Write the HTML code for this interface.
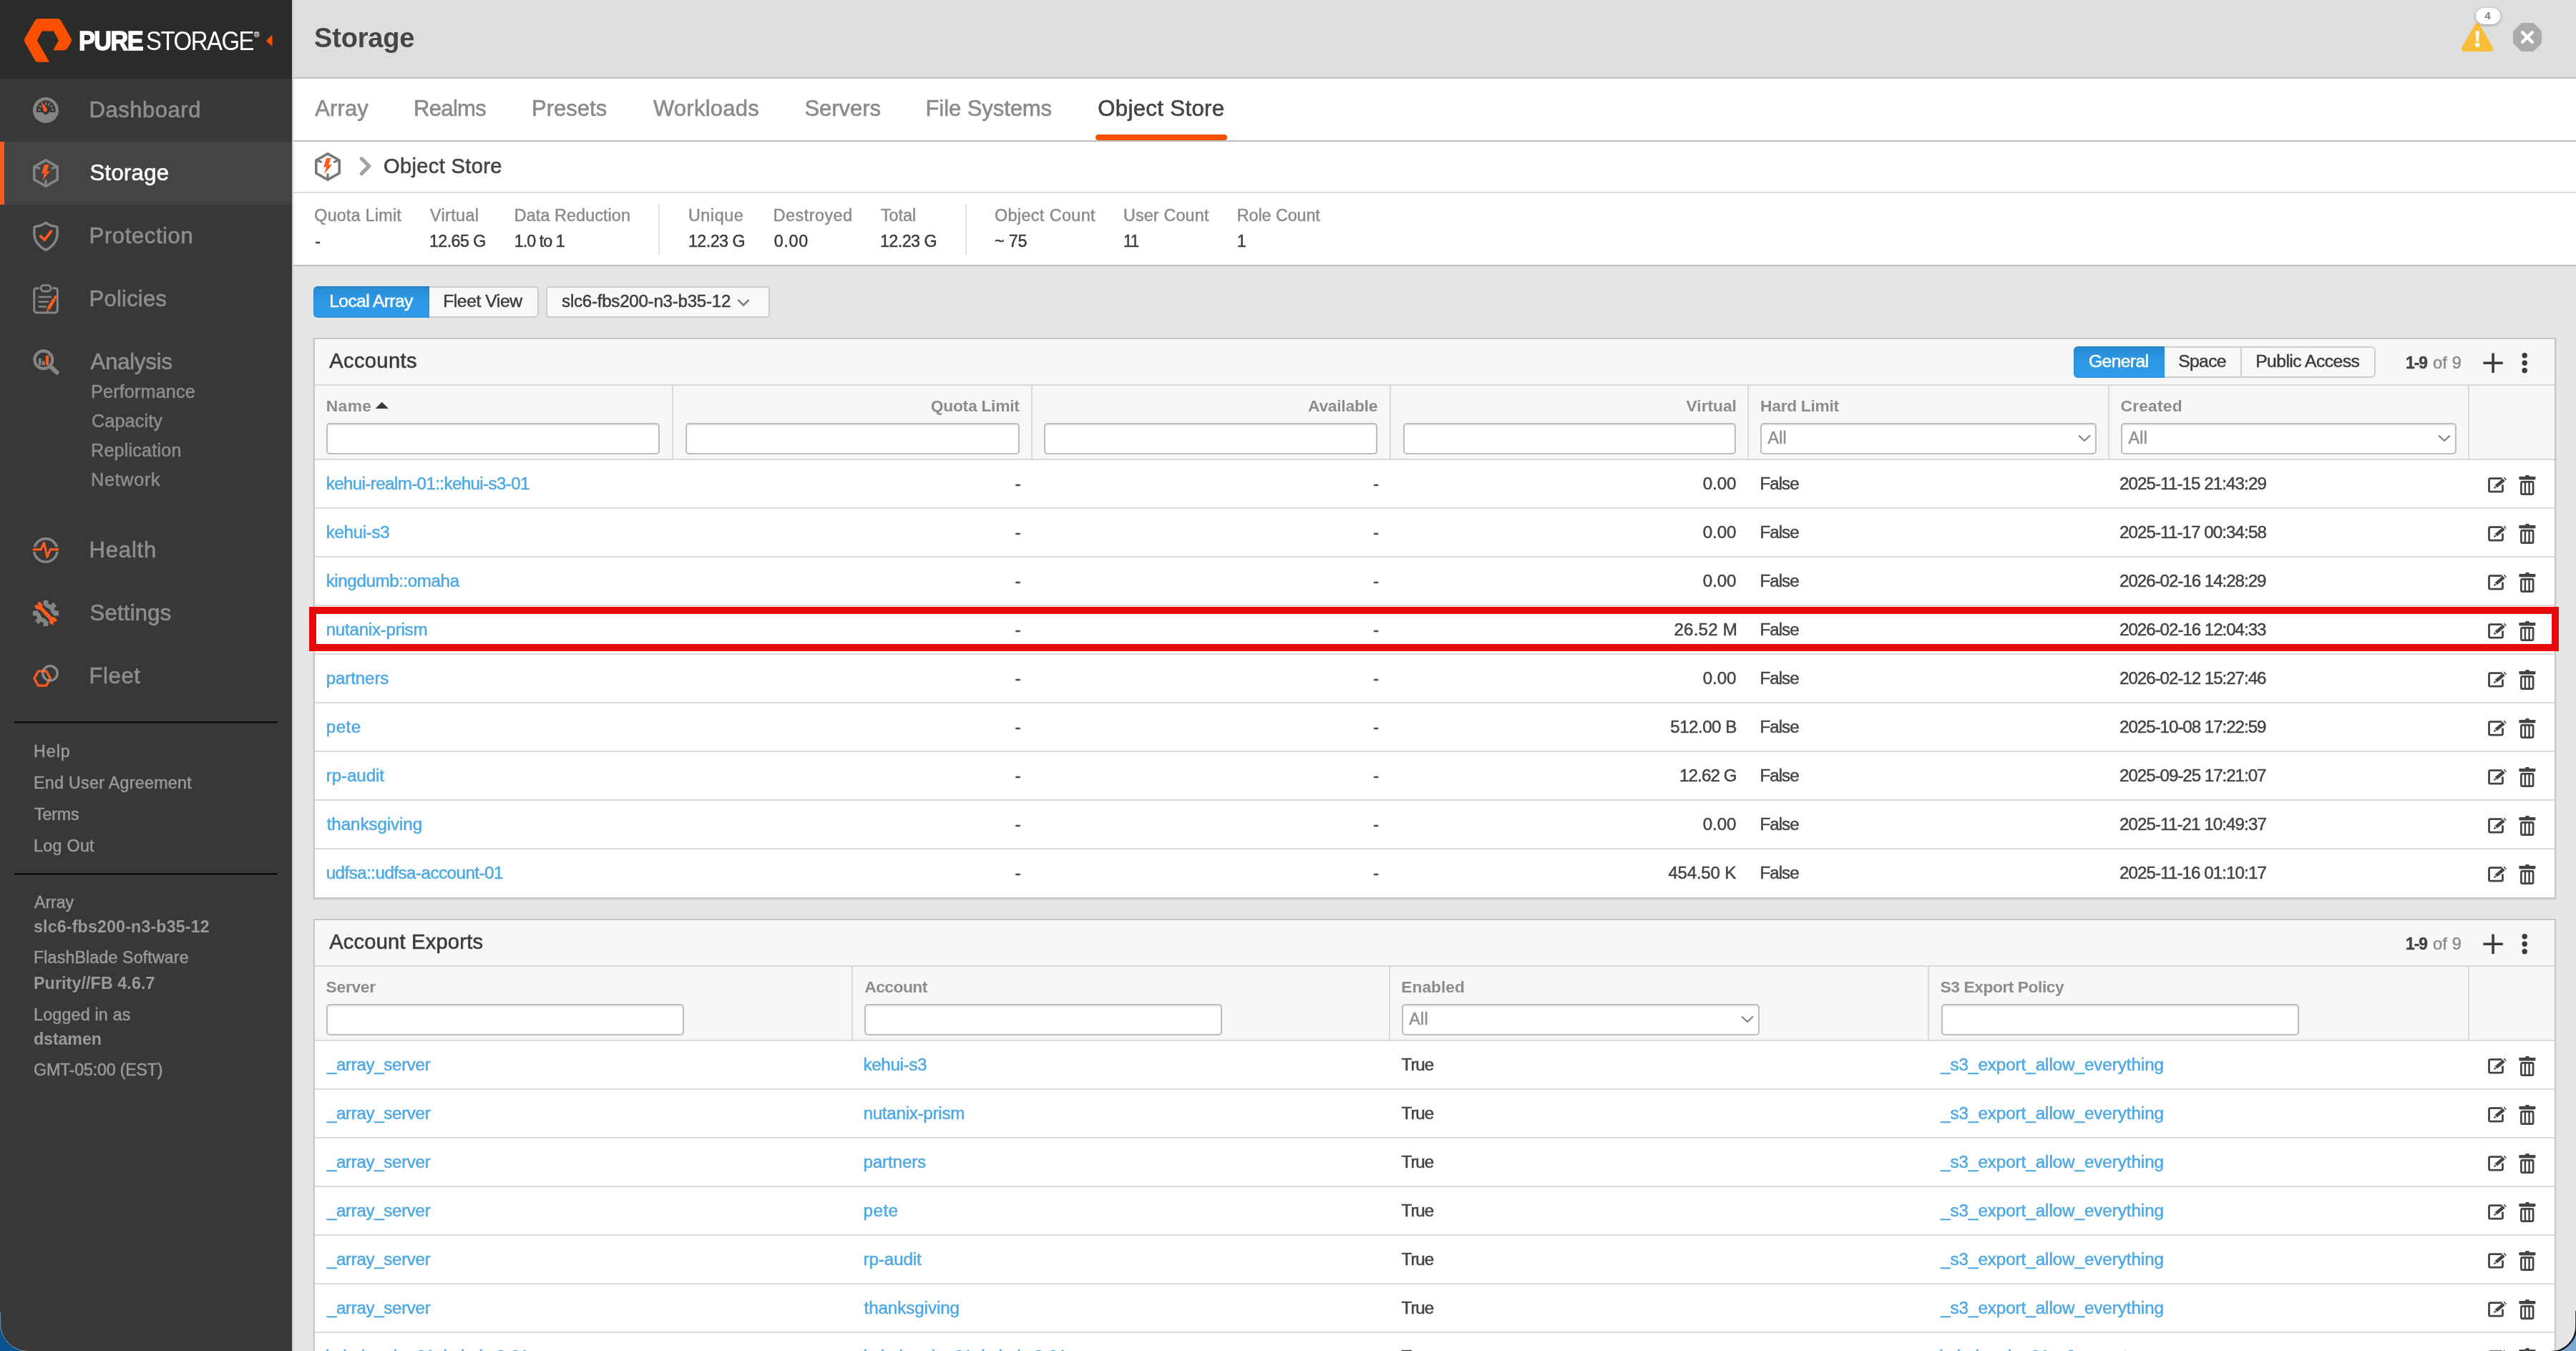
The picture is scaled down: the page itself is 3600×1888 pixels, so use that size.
<!DOCTYPE html>
<html lang="en">
<head>
<meta charset="utf-8">
<title>Pure Storage - Storage - Object Store</title>
<style>
html,body{margin:0;padding:0;}
body{width:3600px;height:1888px;overflow:hidden;background:#0b528f;font-family:"Liberation Sans",sans-serif;}
#app{position:relative;width:3600px;height:1888px;overflow:hidden;background:#e5e5e5;will-change:transform;}
#app div,#app span.t,#app svg,#app nav,#app header,#app section{position:absolute;box-sizing:border-box;}
.g{left:0;top:0;width:0;height:0;}
span.t{white-space:pre;line-height:1;display:block;transform-origin:0 0;}
.inp{background:#fff;border:2px solid #bdbdbd;border-radius:5px;box-shadow:inset 0 2px 2px rgba(0,0,0,.08);}
.rowline{background:#d9d9d9;height:2px;}
.vline{background:#dadada;width:2px;}

</style>
</head>
<body>
<div id="app">
<div style="left:410px;top:0px;width:3190px;height:110px;background:#dedede;border-bottom:2px solid #c1c1c1;"></div>
<div style="left:410px;top:110px;width:3190px;height:88px;background:#fff;border-bottom:2px solid #bcbcbc;"></div>
<div style="left:410px;top:198px;width:3190px;height:72px;background:#fff;border-bottom:2px solid #dcdcdc;"></div>
<div style="left:410px;top:270px;width:3190px;height:102px;background:#fff;border-bottom:2px solid #bfbfbf;"></div>
<div style="left:408px;top:0px;width:2px;height:1888px;background:#cacaca;"></div>
<nav id="sidebar" style="left:0;top:0;width:408px;height:1888px;background:#383838;">
<div style="left:0px;top:0px;width:408px;height:110px;background:#2b2b2b;"></div>
<div style="left:0px;top:198px;width:408px;height:88px;background:#444444;border-left:6px solid #fe5a1f;"></div>
<svg style="left:30px;top:22px" width="76" height="70" viewBox="30 22 76 70"><path d="M49.06 28.40 A5 5 0 0 1 53.39 25.90 L80.60 25.90 A5 5 0 0 1 84.94 28.42 L99.38 53.70 A5 5 0 0 1 99.36 58.69 L94.14 67.70 A5 5 0 0 1 89.82 70.20 L74.30 70.20 L81.84 56.79 A0.6 0.6 0 0 0 81.84 56.21 L75.17 43.91 A0.6 0.6 0 0 0 74.64 43.60 L58.96 43.60 A0.6 0.6 0 0 0 58.43 43.92 L51.86 56.21 A0.6 0.6 0 0 0 51.87 56.79 L68.49 85.80 A0.6 0.6 0 0 1 67.96 86.70 L53.11 86.70 A4.5 4.5 0 0 1 49.20 84.44 L34.43 58.70 A5 5 0 0 1 34.44 53.71 Z" fill="#fe5000"/></svg>
<span class="t" style="left:109.8px;top:40px;font-size:36.4px;color:#fff;font-weight:700;-webkit-text-stroke:1.30px;letter-spacing:-1.64px;transform:scaleX(0.9423);">PURE</span>
<span class="t" style="left:203.5px;top:40px;font-size:36.4px;color:#fff;letter-spacing:-1.64px;transform:scaleX(0.9051);">STORAGE</span>
<span class="t" style="left:355.0px;top:44px;font-size:10px;color:#fff;-webkit-text-stroke:0.20px;">®</span>
<svg style="left:371px;top:48px" width="10" height="18" viewBox="0 0 10 18"><path d="M9.5 0.5 L0.8 9 L9.5 17 Z" fill="#fe5000"/></svg>
<span class="t" style="left:124.6px;top:138px;font-size:31.04px;color:#8e8e8e;-webkit-text-stroke:0.62px;letter-spacing:0.50px;">Dashboard</span>
<span class="t" style="left:125.6px;top:226px;font-size:31.04px;color:#fff;-webkit-text-stroke:0.62px;letter-spacing:0.28px;">Storage</span>
<span class="t" style="left:124.6px;top:314px;font-size:31.04px;color:#8e8e8e;-webkit-text-stroke:0.62px;letter-spacing:0.60px;">Protection</span>
<span class="t" style="left:124.6px;top:402px;font-size:31.04px;color:#8e8e8e;-webkit-text-stroke:0.62px;letter-spacing:0.20px;">Policies</span>
<span class="t" style="left:126.6px;top:490px;font-size:31.04px;color:#8e8e8e;-webkit-text-stroke:0.62px;letter-spacing:-0.16px;">Analysis</span>
<span class="t" style="left:124.6px;top:753px;font-size:31.04px;color:#8e8e8e;-webkit-text-stroke:0.62px;letter-spacing:0.80px;">Health</span>
<span class="t" style="left:125.6px;top:841px;font-size:31.04px;color:#8e8e8e;-webkit-text-stroke:0.62px;letter-spacing:0.23px;">Settings</span>
<span class="t" style="left:124.6px;top:929px;font-size:31.04px;color:#8e8e8e;-webkit-text-stroke:0.62px;letter-spacing:0.57px;">Fleet</span>
<span class="t" style="left:127.0px;top:535px;font-size:25.22px;color:#8e8e8e;-webkit-text-stroke:0.50px;letter-spacing:0.14px;">Performance</span>
<span class="t" style="left:128.0px;top:576px;font-size:25.22px;color:#8e8e8e;-webkit-text-stroke:0.50px;letter-spacing:0.11px;">Capacity</span>
<span class="t" style="left:127.0px;top:617px;font-size:25.22px;color:#8e8e8e;-webkit-text-stroke:0.50px;letter-spacing:0.17px;">Replication</span>
<span class="t" style="left:127.0px;top:658px;font-size:25.22px;color:#8e8e8e;-webkit-text-stroke:0.50px;letter-spacing:0.70px;">Network</span>
<svg style="left:40px;top:130px" width="50" height="840" viewBox="40 130 50 840">
<!-- dashboard -->
<circle cx="63.9" cy="153.9" r="18" fill="#848484"/>
<path d="M51 156.7 A13.5 13.5 0 1 1 77.4 156.7 Z" fill="#383838"/>
<circle cx="63.9" cy="155.8" r="4.3" fill="#383838"/>
<g stroke="#848484" stroke-width="1.7" stroke-linecap="round"><path d="M53.4 153.6 l2.7 -0.6"/><path d="M55.4 147.8 l2.3 1.6"/><path d="M64.1 143.2 l0 2.9"/><path d="M69 144.4 l-1.1 2.7"/><path d="M73 147.8 l-2.3 1.6"/><path d="M75 153.6 l-2.7 -0.6"/></g>
<path d="M56.7 140.3 L66 152.6 A2.8 2.8 0 0 1 61.2 155.2 Z" fill="#ff5a1f"/>
<!-- storage -->
<path d="M64 223.9 L80.2 233 L80.2 251 L64 260.1 L47.8 251 L47.8 233 Z" fill="none" stroke="#848484" stroke-width="3.6" stroke-linejoin="round"/>
<path d="M48.5 232.6 L54.6 235.2 M79.5 232.6 L73.4 235.2 M64 259.5 L64 252.6" stroke="#848484" stroke-width="3.2" stroke-linecap="round"/>
<path d="M62.1 230.1 L68.4 230.1 L65.4 239.3 L69.9 239.3 L59.1 252.5 L62.1 242.5 L58.1 242.5 Z" fill="#ff5a1f"/>
<!-- protection -->
<path d="M64 311.2 C60 314.4 55 316.2 50 316.6 Q47.9 316.8 47.9 319 L47.9 326 C47.9 337 54.5 344.6 64 349.4 C73.5 344.6 80.1 337 80.1 326 L80.1 319 Q80.1 316.8 78 316.6 C73 316.2 68 314.4 64 311.2 Z" fill="none" stroke="#848484" stroke-width="3.5" stroke-linejoin="round"/>
<path d="M56.6 330.2 L62.4 335.2 L71.6 323.2" fill="none" stroke="#ff5a1f" stroke-width="3.7" stroke-linejoin="round" stroke-linecap="round"/>
<!-- policies -->
<path d="M55 402.7 L51.6 402.7 Q47.7 402.7 47.7 406.6 L47.7 433 Q47.7 436.9 51.6 436.9 L76.4 436.9 Q80.3 436.9 80.3 433 L80.3 406.6 Q80.3 402.7 76.4 402.7 L73 402.7" fill="none" stroke="#848484" stroke-width="3"/>
<rect x="57.4" y="398.6" width="13.4" height="8.4" rx="3.6" fill="none" stroke="#848484" stroke-width="2.8"/>
<path d="M54.6 415 L71 415 M54.6 421.8 L67.2 421.8 M54.6 428.6 L63.8 428.6" stroke="#848484" stroke-width="2.5" stroke-linecap="round"/>
<path d="M76 417.6 L67.4 432.2" stroke="#ff5a1f" stroke-width="4.5"/>
<circle cx="77.4" cy="415.4" r="2.3" fill="#ff5a1f"/>
<path d="M64.8 436.5 L65.6 432.3 L68.9 434.2 Z" fill="#ff5a1f"/>
<!-- analysis -->
<circle cx="60.8" cy="502.7" r="12.4" fill="none" stroke="#848484" stroke-width="4.2"/>
<path d="M70.8 512.6 L79.4 520.6" stroke="#848484" stroke-width="6.2" stroke-linecap="round"/>
<rect x="54" y="501" width="3.7" height="9.4" fill="#848484"/><rect x="59" y="504.4" width="3.7" height="6" fill="#848484"/><rect x="64.1" y="496.9" width="4" height="13.5" fill="#ff5a1f"/>
<!-- health -->
<circle cx="63.9" cy="769.1" r="16.2" fill="none" stroke="#848484" stroke-width="3.6"/>
<path d="M44 767.8 L84 767.8" stroke="#383838" stroke-width="6.6"/>
<path d="M46 767.8 L57.2 767.8 L61.6 758.8 L66 778.4 L70.4 767.8 L82 767.8" fill="none" stroke="#ff5a1f" stroke-width="3.2" stroke-linejoin="round"/>
<!-- settings -->
<g transform="translate(64 857)">
<circle r="10.5" fill="none" stroke="#848484" stroke-width="6"/>
<g fill="#848484"><rect x="-3.4" y="-18" width="6.8" height="7"/><rect x="-3.4" y="11" width="6.8" height="7"/><rect x="-18" y="-3.4" width="7" height="6.8"/><rect x="11" y="-3.4" width="7" height="6.8"/>
<g transform="rotate(45)"><rect x="-3.4" y="-18" width="6.8" height="7"/><rect x="-3.4" y="11" width="6.8" height="7"/><rect x="-18" y="-3.4" width="7" height="6.8"/><rect x="11" y="-3.4" width="7" height="6.8"/></g></g>
<circle r="7.6" fill="#383838"/>
<path d="M-13 -13.5 L13 13.5" stroke="#383838" stroke-width="12" stroke-linecap="round"/>
<path d="M-8.5 -9 L8.5 9" stroke="#ff5a1f" stroke-width="5.4" stroke-linecap="butt"/>
<circle cx="-10" cy="-10.6" r="5.3" fill="#ff5a1f"/><circle cx="10" cy="10.6" r="5.3" fill="#ff5a1f"/>
<path d="M-15.5 -14 L-11 -13.2" stroke="#383838" stroke-width="4.2"/><path d="M15.5 14 L11 13.2" stroke="#383838" stroke-width="4.2"/>
</g>
<!-- fleet -->
<path d="M53.5 937.8 L64.7 937.8 L70.3 948 L64.7 958.2 L53.5 958.2 L47.9 948 Z" fill="none" stroke="#ff5a1f" stroke-width="3.3" stroke-linejoin="round"/>
<circle cx="70" cy="940.9" r="10.2" fill="none" stroke="#9a9a9a" stroke-opacity="0.85" stroke-width="3.2"/>
</svg>
<div style="left:20px;top:1008px;width:368px;height:4px;background:#111;border-bottom:1px solid #474747;"></div>
<div style="left:20px;top:1219.5px;width:368px;height:4px;background:#111;border-bottom:1px solid #474747;"></div>
<span class="t" style="left:47.0px;top:1039px;font-size:23.28px;color:#9a9a9a;-webkit-text-stroke:0.47px;letter-spacing:0.97px;">Help</span>
<span class="t" style="left:47.0px;top:1083px;font-size:23.28px;color:#9a9a9a;-webkit-text-stroke:0.47px;letter-spacing:0.28px;">End User Agreement</span>
<span class="t" style="left:48.0px;top:1127px;font-size:23.28px;color:#9a9a9a;-webkit-text-stroke:0.47px;letter-spacing:-0.20px;">Terms</span>
<span class="t" style="left:47.0px;top:1171px;font-size:23.28px;color:#9a9a9a;-webkit-text-stroke:0.47px;letter-spacing:0.30px;">Log Out</span>
<span class="t" style="left:48.0px;top:1250px;font-size:23.28px;color:#9a9a9a;-webkit-text-stroke:0.47px;letter-spacing:-0.10px;">Array</span>
<span class="t" style="left:47.0px;top:1327px;font-size:23.28px;color:#9a9a9a;-webkit-text-stroke:0.47px;letter-spacing:0.11px;">FlashBlade Software</span>
<span class="t" style="left:47.0px;top:1407px;font-size:23.28px;color:#9a9a9a;-webkit-text-stroke:0.47px;letter-spacing:0.20px;">Logged in as</span>
<span class="t" style="left:47.0px;top:1484px;font-size:23.28px;color:#9a9a9a;-webkit-text-stroke:0.47px;letter-spacing:-0.22px;">GMT-05:00 (EST)</span>
<span class="t" style="left:47.0px;top:1284px;font-size:23.28px;color:#9a9a9a;font-weight:700;letter-spacing:0.13px;">slc6-fbs200-n3-b35-12</span>
<span class="t" style="left:47.0px;top:1363px;font-size:23.28px;color:#9a9a9a;font-weight:700;letter-spacing:0.09px;">Purity//FB 4.6.7</span>
<span class="t" style="left:47.0px;top:1441px;font-size:23.28px;color:#9a9a9a;font-weight:700;letter-spacing:-0.12px;">dstamen</span>
</nav>
<header class="g">
<span class="t" style="left:439.0px;top:34px;font-size:38.0px;color:#454545;font-weight:700;letter-spacing:-0.17px;">Storage</span>
<svg style="left:3436px;top:8px" width="130" height="70" viewBox="3436 8 130 70">
<path d="M3462.1 36.6 L3480.3 68 L3443.9 68 Z" fill="#fbbe38" stroke="#fbbe38" stroke-width="8" stroke-linejoin="round"/>
<path d="M3459.6 44.2 Q3462.2 42 3464.8 44.2 L3463.9 57.6 Q3462.2 58.8 3460.5 57.6 Z" fill="#fff"/><circle cx="3462.2" cy="62.8" r="3" fill="#fff"/>
<rect x="3460" y="10.9" width="34.3" height="23" rx="11.5" fill="#fff" style="filter:drop-shadow(0 1.5px 2px rgba(0,0,0,.35))"/>
<path d="M3524.2 32.6 L3540 32.6 L3551.4 44 L3551.4 60 L3540 71.4 L3524.2 71.4 L3512.8 60 L3512.8 44 Z" fill="#ababab" stroke="#ababab" stroke-width="1.4" stroke-linejoin="round"/>
<path d="M3525.2 45.2 L3538.8 58.8 M3538.8 45.2 L3525.2 58.8" stroke="#fff" stroke-width="4.4" stroke-linecap="round"/>
</svg>
<span class="t" style="left:3472.3px;top:14px;font-size:15.5px;color:#828282;font-weight:700;">4</span>
</header>
<nav class="g">
<span class="t" style="left:440.3px;top:136px;font-size:31.04px;color:#8b8b8b;-webkit-text-stroke:0.62px;letter-spacing:0.10px;">Array</span>
<span class="t" style="left:578.0px;top:136px;font-size:31.04px;color:#8b8b8b;-webkit-text-stroke:0.62px;letter-spacing:-0.68px;">Realms</span>
<span class="t" style="left:743.0px;top:136px;font-size:31.04px;color:#8b8b8b;-webkit-text-stroke:0.62px;">Presets</span>
<span class="t" style="left:912.9px;top:136px;font-size:31.04px;color:#8b8b8b;-webkit-text-stroke:0.62px;letter-spacing:0.23px;">Workloads</span>
<span class="t" style="left:1124.4px;top:136px;font-size:31.04px;color:#8b8b8b;-webkit-text-stroke:0.62px;letter-spacing:-0.03px;">Servers</span>
<span class="t" style="left:1293.5px;top:136px;font-size:31.04px;color:#8b8b8b;-webkit-text-stroke:0.62px;letter-spacing:-0.09px;">File Systems</span>
<span class="t" style="left:1534.2px;top:136px;font-size:31.04px;color:#444;-webkit-text-stroke:0.62px;letter-spacing:0.40px;">Object Store</span>
<div style="left:1531px;top:188px;width:184px;height:8px;background:#fa4f00;border-radius:4px;"></div>
</nav>
<div class="g">
<svg style="left:436px;top:208px" width="90" height="50" viewBox="436 208 90 50">
<path d="M458 214.9 L474.2 224 L474.2 242 L458 251.1 L441.8 242 L441.8 224 Z" fill="none" stroke="#787878" stroke-width="3.6" stroke-linejoin="round"/>
<path d="M442.5 223.6 L448.6 226.2 M473.5 223.6 L467.4 226.2 M458 250.5 L458 243.6" stroke="#787878" stroke-width="3.2" stroke-linecap="round"/>
<path d="M456.1 221.1 L462.4 221.1 L459.4 230.3 L463.9 230.3 L453.1 243.5 L456.1 233.5 L452.1 233.5 Z" fill="#ff5a1f"/>
<path d="M505.4 221.8 L515.8 232.2 L505.4 242.6" fill="none" stroke="#a3a3a3" stroke-width="5.2" stroke-linecap="round" stroke-linejoin="round"/>
</svg>
<span class="t" style="left:536.0px;top:218px;font-size:29.1px;color:#444;-webkit-text-stroke:0.58px;letter-spacing:0.34px;">Object Store</span>
</div>
<section class="g">
<span class="t" style="left:439.3px;top:290px;font-size:23.28px;color:#8b8b8b;-webkit-text-stroke:0.47px;letter-spacing:0.25px;">Quota Limit</span>
<span class="t" style="left:440.3px;top:326px;font-size:23.25px;color:#3c3c3c;-webkit-text-stroke:0.47px;">-</span>
<span class="t" style="left:601.0px;top:290px;font-size:23.28px;color:#8b8b8b;-webkit-text-stroke:0.47px;letter-spacing:0.40px;">Virtual</span>
<span class="t" style="left:600.0px;top:326px;font-size:23.25px;color:#3c3c3c;-webkit-text-stroke:0.47px;letter-spacing:-0.58px;">12.65 G</span>
<span class="t" style="left:718.8px;top:290px;font-size:23.28px;color:#8b8b8b;-webkit-text-stroke:0.47px;letter-spacing:0.13px;">Data Reduction</span>
<span class="t" style="left:718.8px;top:326px;font-size:23.25px;color:#3c3c3c;-webkit-text-stroke:0.47px;letter-spacing:-0.97px;">1.0 to 1</span>
<span class="t" style="left:961.9px;top:290px;font-size:23.28px;color:#8b8b8b;-webkit-text-stroke:0.47px;letter-spacing:0.62px;">Unique</span>
<span class="t" style="left:961.9px;top:326px;font-size:23.25px;color:#3c3c3c;-webkit-text-stroke:0.47px;letter-spacing:-0.52px;">12.23 G</span>
<span class="t" style="left:1080.7px;top:290px;font-size:23.28px;color:#8b8b8b;-webkit-text-stroke:0.47px;letter-spacing:0.54px;">Destroyed</span>
<span class="t" style="left:1081.7px;top:326px;font-size:23.25px;color:#3c3c3c;-webkit-text-stroke:0.47px;letter-spacing:0.73px;">0.00</span>
<span class="t" style="left:1230.9px;top:290px;font-size:23.28px;color:#8b8b8b;-webkit-text-stroke:0.47px;letter-spacing:0.05px;">Total</span>
<span class="t" style="left:1229.9px;top:326px;font-size:23.25px;color:#3c3c3c;-webkit-text-stroke:0.47px;letter-spacing:-0.52px;">12.23 G</span>
<span class="t" style="left:1389.9px;top:290px;font-size:23.28px;color:#8b8b8b;-webkit-text-stroke:0.47px;letter-spacing:0.44px;">Object Count</span>
<span class="t" style="left:1389.9px;top:326px;font-size:23.25px;color:#3c3c3c;-webkit-text-stroke:0.47px;letter-spacing:-0.10px;">~ 75</span>
<span class="t" style="left:1569.9px;top:290px;font-size:23.28px;color:#8b8b8b;-webkit-text-stroke:0.47px;letter-spacing:0.20px;">User Count</span>
<span class="t" style="left:1569.9px;top:326px;font-size:23.25px;color:#3c3c3c;-webkit-text-stroke:0.47px;letter-spacing:-1.05px;transform:scaleX(0.9566);">11</span>
<span class="t" style="left:1728.8px;top:290px;font-size:23.28px;color:#8b8b8b;-webkit-text-stroke:0.47px;letter-spacing:-0.04px;">Role Count</span>
<span class="t" style="left:1728.8px;top:326px;font-size:23.25px;color:#3c3c3c;-webkit-text-stroke:0.47px;">1</span>
<div style="left:920px;top:285px;width:2px;height:71px;background:#e2e2e2;"></div>
<div style="left:1349px;top:285px;width:2px;height:71px;background:#e2e2e2;"></div>
</section>
<div class="g">
<div style="left:438px;top:400px;width:162px;height:44px;background:linear-gradient(#2889d2,#2d98e6 45%,#2f9cea);border-radius:6px 0 0 6px;box-shadow:inset 0 0 3px rgba(0,0,0,.18);"></div>
<div style="left:600px;top:400px;width:153px;height:44px;background:#f8f8f8;border:2px solid #cdcdcd;border-left:none;border-radius:0 6px 6px 0;"></div>
<div style="left:763px;top:400px;width:313px;height:44px;background:#f8f8f8;border:2px solid #cdcdcd;border-radius:4px;"></div>
<span class="t" style="left:460.2px;top:409px;font-size:24.7px;color:#fff;-webkit-text-stroke:0.49px;letter-spacing:-0.63px;">Local Array</span>
<span class="t" style="left:619.2px;top:409px;font-size:24.7px;color:#3c3c3c;-webkit-text-stroke:0.49px;letter-spacing:-0.44px;">Fleet View</span>
<span class="t" style="left:785.1px;top:409px;font-size:24.18px;color:#3c3c3c;-webkit-text-stroke:0.48px;letter-spacing:-0.28px;">slc6-fbs200-n3-b35-12</span>
<svg style="left:1029px;top:416px" width="20" height="14" viewBox="0 0 20 14"><path d="M2.5 3 L10 10.5 L17.5 3" fill="none" stroke="#858585" stroke-width="2.7"/></svg>
</div>
<section class="g">
<div id="accounts" style="left:438px;top:472px;width:3134px;height:784px;background:#fff;border:2px solid #c6c6c6;box-shadow:0 1px 2px rgba(0,0,0,.12);"></div>
<div style="left:440px;top:474px;width:3130px;height:169px;background:#f7f7f7;"></div>
<div class="rowline" style="left:440px;top:537px;width:3130px;height:2px;"></div>
<div class="rowline" style="left:440px;top:641px;width:3130px;height:2px;"></div>
<span class="t" style="left:460.2px;top:490px;font-size:29.1px;color:#3b3b3b;-webkit-text-stroke:0.58px;letter-spacing:0.37px;">Accounts</span>
<span class="t" style="left:3361.6px;top:495px;font-size:23.75px;color:#444;font-weight:700;-webkit-text-stroke:0.50px;letter-spacing:-1.07px;transform:scaleX(0.9591);">1-9</span>
<span class="t" style="left:3399.9px;top:495px;font-size:23.75px;color:#8b8b8b;-webkit-text-stroke:0.48px;letter-spacing:0.13px;">of 9</span>
<svg style="left:3466px;top:488.8px" width="80" height="40" viewBox="3466 16 80 40"><path d="M3470.4 34.3 L3497.8 34.3 M3484.1 20.5 L3484.1 48" stroke="#3b3b3b" stroke-width="3.6"/><circle cx="3528.2" cy="23.8" r="3.7" fill="#3b3b3b"/><circle cx="3528.2" cy="34.3" r="3.7" fill="#3b3b3b"/><circle cx="3528.2" cy="44.8" r="3.7" fill="#3b3b3b"/></svg>
<div style="left:2898px;top:484px;width:127px;height:44px;background:linear-gradient(#2889d2,#2d98e6 45%,#2f9cea);border-radius:6px 0 0 6px;box-shadow:inset 0 0 3px rgba(0,0,0,.18);"></div>
<div style="left:3025px;top:484px;width:108px;height:44px;background:#f8f8f8;border:2px solid #cdcdcd;border-left:none;"></div>
<div style="left:3133px;top:484px;width:187px;height:44px;background:#f8f8f8;border:2px solid #cdcdcd;border-left:none;border-radius:0 6px 6px 0;"></div>
<span class="t" style="left:2919.0px;top:493px;font-size:24.7px;color:#fff;-webkit-text-stroke:0.49px;letter-spacing:-0.63px;">General</span>
<span class="t" style="left:3044.2px;top:493px;font-size:24.7px;color:#3c3c3c;-webkit-text-stroke:0.49px;letter-spacing:-0.65px;">Space</span>
<span class="t" style="left:3152.2px;top:493px;font-size:24.7px;color:#3c3c3c;-webkit-text-stroke:0.49px;letter-spacing:-0.56px;">Public Access</span>
<div class="vline" style="left:939px;top:539px;width:2px;height:102px;"></div>
<div class="vline" style="left:1441px;top:539px;width:2px;height:102px;"></div>
<div class="vline" style="left:1941.5px;top:539px;width:2px;height:102px;"></div>
<div class="vline" style="left:2442px;top:539px;width:2px;height:102px;"></div>
<div class="vline" style="left:2946px;top:539px;width:2px;height:102px;"></div>
<div class="vline" style="left:3449px;top:539px;width:2px;height:102px;"></div>
<span class="t" style="left:455.7px;top:556px;font-size:22.8px;color:#8c8c8c;font-weight:700;letter-spacing:0.40px;">Name</span>
<svg style="left:524px;top:560.6px" width="20" height="11" viewBox="0 0 20 11"><path d="M0.6 10 L9.7 0.8 L19 10 Z" fill="#3a3a3a"/></svg>
<span class="t" style="left:1300.8px;top:556px;font-size:22.8px;color:#8c8c8c;font-weight:700;letter-spacing:-0.26px;">Quota Limit</span>
<span class="t" style="left:1828.0px;top:556px;font-size:22.8px;color:#8c8c8c;font-weight:700;letter-spacing:-0.24px;">Available</span>
<span class="t" style="left:2356.6px;top:556px;font-size:22.8px;color:#8c8c8c;font-weight:700;letter-spacing:-0.03px;">Virtual</span>
<span class="t" style="left:2460.1px;top:556px;font-size:22.8px;color:#8c8c8c;font-weight:700;letter-spacing:-0.30px;">Hard Limit</span>
<span class="t" style="left:2963.5px;top:556px;font-size:22.8px;color:#8c8c8c;font-weight:700;letter-spacing:0.20px;">Created</span>
<div class="inp" style="left:456px;top:591px;width:466px;height:44px;"></div>
<div class="inp" style="left:958px;top:591px;width:467px;height:44px;"></div>
<div class="inp" style="left:1459px;top:591px;width:466px;height:44px;"></div>
<div class="inp" style="left:1961px;top:591px;width:465px;height:44px;"></div>
<div class="inp" style="left:2460px;top:591px;width:470px;height:44px;"></div>
<span class="t" style="left:2470.4px;top:601px;font-size:23.28px;color:#8f8f8f;-webkit-text-stroke:0.47px;letter-spacing:0.25px;">All</span>
<svg style="left:2903px;top:606px" width="20" height="12" viewBox="0 0 20 12"><path d="M2 2.5 L10 10 L18 2.5" fill="none" stroke="#858585" stroke-width="2.3"/></svg>
<div class="inp" style="left:2964px;top:591px;width:469px;height:44px;"></div>
<span class="t" style="left:2974.5px;top:601px;font-size:23.28px;color:#8f8f8f;-webkit-text-stroke:0.47px;letter-spacing:0.25px;">All</span>
<svg style="left:3406.2px;top:606px" width="20" height="12" viewBox="0 0 20 12"><path d="M2 2.5 L10 10 L18 2.5" fill="none" stroke="#858585" stroke-width="2.3"/></svg>
<span class="t" style="left:455.7px;top:664px;font-size:24.18px;color:#4da8e4;-webkit-text-stroke:0.48px;letter-spacing:-0.62px;">kehui-realm-01::kehui-s3-01</span>
<span class="t" style="left:1418.6px;top:664px;font-size:24.18px;color:#444444;-webkit-text-stroke:0.48px;">-</span>
<span class="t" style="left:1919.0px;top:664px;font-size:24.18px;color:#444444;-webkit-text-stroke:0.48px;">-</span>
<span class="t" style="left:2379.7px;top:664px;font-size:24.18px;color:#444444;-webkit-text-stroke:0.48px;letter-spacing:-0.07px;">0.00</span>
<span class="t" style="left:2459.4px;top:664px;font-size:24.18px;color:#444444;-webkit-text-stroke:0.48px;letter-spacing:-0.97px;">False</span>
<span class="t" style="left:2962.1px;top:664px;font-size:24.18px;color:#444444;-webkit-text-stroke:0.48px;letter-spacing:-0.94px;">2025-11-15 21:43:29</span>
<svg style="left:3474px;top:661.9px" width="74" height="34" viewBox="3474 20 74 34">
<path d="M3496.6 26.7 L3480.4 26.7 Q3478.5 26.7 3478.5 28.6 L3478.5 43.3 Q3478.5 45.2 3480.4 45.2 L3495.6 45.2 Q3497.5 45.2 3497.5 43.3 L3497.5 35.4" fill="none" stroke="#444" stroke-width="2.8"/>
<path d="M3488.2 37.7 L3499.2 28.4" stroke="#444" stroke-width="4.6"/>
<path d="M3500.2 27.5 L3501.4 26.5" stroke="#444" stroke-width="4.4"/>
<path d="M3485 40.9 L3486.1 37.2 L3488.8 39.8 Z" fill="#444"/>
<rect x="3520.3" y="24.1" width="23.2" height="4.4" rx="1.4" fill="#444"/>
<rect x="3529.3" y="22.1" width="5.4" height="3.4" rx="1.2" fill="#444"/>
<rect x="3523.4" y="31.4" width="16.7" height="17.3" rx="1.6" fill="none" stroke="#444" stroke-width="2.7"/>
<path d="M3528.9 31 L3528.9 48.4 M3534.6 31 L3534.6 48.4" stroke="#444" stroke-width="2.5"/>
</svg>
<div class="rowline" style="left:440px;top:709px;width:3130px;height:2px;"></div>
<span class="t" style="left:455.7px;top:732px;font-size:24.18px;color:#4da8e4;-webkit-text-stroke:0.48px;letter-spacing:-0.33px;">kehui-s3</span>
<span class="t" style="left:1418.6px;top:732px;font-size:24.18px;color:#444444;-webkit-text-stroke:0.48px;">-</span>
<span class="t" style="left:1919.0px;top:732px;font-size:24.18px;color:#444444;-webkit-text-stroke:0.48px;">-</span>
<span class="t" style="left:2379.7px;top:732px;font-size:24.18px;color:#444444;-webkit-text-stroke:0.48px;letter-spacing:-0.07px;">0.00</span>
<span class="t" style="left:2459.4px;top:732px;font-size:24.18px;color:#444444;-webkit-text-stroke:0.48px;letter-spacing:-0.97px;">False</span>
<span class="t" style="left:2962.1px;top:732px;font-size:24.18px;color:#444444;-webkit-text-stroke:0.48px;letter-spacing:-0.94px;">2025-11-17 00:34:58</span>
<svg style="left:3474px;top:729.9px" width="74" height="34" viewBox="3474 20 74 34">
<path d="M3496.6 26.7 L3480.4 26.7 Q3478.5 26.7 3478.5 28.6 L3478.5 43.3 Q3478.5 45.2 3480.4 45.2 L3495.6 45.2 Q3497.5 45.2 3497.5 43.3 L3497.5 35.4" fill="none" stroke="#444" stroke-width="2.8"/>
<path d="M3488.2 37.7 L3499.2 28.4" stroke="#444" stroke-width="4.6"/>
<path d="M3500.2 27.5 L3501.4 26.5" stroke="#444" stroke-width="4.4"/>
<path d="M3485 40.9 L3486.1 37.2 L3488.8 39.8 Z" fill="#444"/>
<rect x="3520.3" y="24.1" width="23.2" height="4.4" rx="1.4" fill="#444"/>
<rect x="3529.3" y="22.1" width="5.4" height="3.4" rx="1.2" fill="#444"/>
<rect x="3523.4" y="31.4" width="16.7" height="17.3" rx="1.6" fill="none" stroke="#444" stroke-width="2.7"/>
<path d="M3528.9 31 L3528.9 48.4 M3534.6 31 L3534.6 48.4" stroke="#444" stroke-width="2.5"/>
</svg>
<div class="rowline" style="left:440px;top:777px;width:3130px;height:2px;"></div>
<span class="t" style="left:455.7px;top:800px;font-size:24.18px;color:#4da8e4;-webkit-text-stroke:0.48px;letter-spacing:-0.41px;">kingdumb::omaha</span>
<span class="t" style="left:1418.6px;top:800px;font-size:24.18px;color:#444444;-webkit-text-stroke:0.48px;">-</span>
<span class="t" style="left:1919.0px;top:800px;font-size:24.18px;color:#444444;-webkit-text-stroke:0.48px;">-</span>
<span class="t" style="left:2379.7px;top:800px;font-size:24.18px;color:#444444;-webkit-text-stroke:0.48px;letter-spacing:-0.07px;">0.00</span>
<span class="t" style="left:2459.4px;top:800px;font-size:24.18px;color:#444444;-webkit-text-stroke:0.48px;letter-spacing:-0.97px;">False</span>
<span class="t" style="left:2962.1px;top:800px;font-size:24.18px;color:#444444;-webkit-text-stroke:0.48px;letter-spacing:-1.06px;">2026-02-16 14:28:29</span>
<svg style="left:3474px;top:797.9px" width="74" height="34" viewBox="3474 20 74 34">
<path d="M3496.6 26.7 L3480.4 26.7 Q3478.5 26.7 3478.5 28.6 L3478.5 43.3 Q3478.5 45.2 3480.4 45.2 L3495.6 45.2 Q3497.5 45.2 3497.5 43.3 L3497.5 35.4" fill="none" stroke="#444" stroke-width="2.8"/>
<path d="M3488.2 37.7 L3499.2 28.4" stroke="#444" stroke-width="4.6"/>
<path d="M3500.2 27.5 L3501.4 26.5" stroke="#444" stroke-width="4.4"/>
<path d="M3485 40.9 L3486.1 37.2 L3488.8 39.8 Z" fill="#444"/>
<rect x="3520.3" y="24.1" width="23.2" height="4.4" rx="1.4" fill="#444"/>
<rect x="3529.3" y="22.1" width="5.4" height="3.4" rx="1.2" fill="#444"/>
<rect x="3523.4" y="31.4" width="16.7" height="17.3" rx="1.6" fill="none" stroke="#444" stroke-width="2.7"/>
<path d="M3528.9 31 L3528.9 48.4 M3534.6 31 L3534.6 48.4" stroke="#444" stroke-width="2.5"/>
</svg>
<div class="rowline" style="left:440px;top:845px;width:3130px;height:2px;"></div>
<span class="t" style="left:455.7px;top:868px;font-size:24.18px;color:#4da8e4;-webkit-text-stroke:0.48px;letter-spacing:-0.27px;">nutanix-prism</span>
<span class="t" style="left:1418.6px;top:868px;font-size:24.18px;color:#444444;-webkit-text-stroke:0.48px;">-</span>
<span class="t" style="left:1919.0px;top:868px;font-size:24.18px;color:#444444;-webkit-text-stroke:0.48px;">-</span>
<span class="t" style="left:2339.5px;top:868px;font-size:24.18px;color:#444444;-webkit-text-stroke:0.48px;letter-spacing:0.17px;">26.52 M</span>
<span class="t" style="left:2459.4px;top:868px;font-size:24.18px;color:#444444;-webkit-text-stroke:0.48px;letter-spacing:-0.97px;">False</span>
<span class="t" style="left:2962.1px;top:868px;font-size:24.18px;color:#444444;-webkit-text-stroke:0.48px;letter-spacing:-1.06px;">2026-02-16 12:04:33</span>
<svg style="left:3474px;top:865.9px" width="74" height="34" viewBox="3474 20 74 34">
<path d="M3496.6 26.7 L3480.4 26.7 Q3478.5 26.7 3478.5 28.6 L3478.5 43.3 Q3478.5 45.2 3480.4 45.2 L3495.6 45.2 Q3497.5 45.2 3497.5 43.3 L3497.5 35.4" fill="none" stroke="#444" stroke-width="2.8"/>
<path d="M3488.2 37.7 L3499.2 28.4" stroke="#444" stroke-width="4.6"/>
<path d="M3500.2 27.5 L3501.4 26.5" stroke="#444" stroke-width="4.4"/>
<path d="M3485 40.9 L3486.1 37.2 L3488.8 39.8 Z" fill="#444"/>
<rect x="3520.3" y="24.1" width="23.2" height="4.4" rx="1.4" fill="#444"/>
<rect x="3529.3" y="22.1" width="5.4" height="3.4" rx="1.2" fill="#444"/>
<rect x="3523.4" y="31.4" width="16.7" height="17.3" rx="1.6" fill="none" stroke="#444" stroke-width="2.7"/>
<path d="M3528.9 31 L3528.9 48.4 M3534.6 31 L3534.6 48.4" stroke="#444" stroke-width="2.5"/>
</svg>
<div class="rowline" style="left:440px;top:913px;width:3130px;height:2px;"></div>
<span class="t" style="left:455.7px;top:936px;font-size:24.18px;color:#4da8e4;-webkit-text-stroke:0.48px;letter-spacing:-0.14px;">partners</span>
<span class="t" style="left:1418.6px;top:936px;font-size:24.18px;color:#444444;-webkit-text-stroke:0.48px;">-</span>
<span class="t" style="left:1919.0px;top:936px;font-size:24.18px;color:#444444;-webkit-text-stroke:0.48px;">-</span>
<span class="t" style="left:2379.7px;top:936px;font-size:24.18px;color:#444444;-webkit-text-stroke:0.48px;letter-spacing:-0.07px;">0.00</span>
<span class="t" style="left:2459.4px;top:936px;font-size:24.18px;color:#444444;-webkit-text-stroke:0.48px;letter-spacing:-0.97px;">False</span>
<span class="t" style="left:2962.1px;top:936px;font-size:24.18px;color:#444444;-webkit-text-stroke:0.48px;letter-spacing:-1.06px;">2026-02-12 15:27:46</span>
<svg style="left:3474px;top:933.9px" width="74" height="34" viewBox="3474 20 74 34">
<path d="M3496.6 26.7 L3480.4 26.7 Q3478.5 26.7 3478.5 28.6 L3478.5 43.3 Q3478.5 45.2 3480.4 45.2 L3495.6 45.2 Q3497.5 45.2 3497.5 43.3 L3497.5 35.4" fill="none" stroke="#444" stroke-width="2.8"/>
<path d="M3488.2 37.7 L3499.2 28.4" stroke="#444" stroke-width="4.6"/>
<path d="M3500.2 27.5 L3501.4 26.5" stroke="#444" stroke-width="4.4"/>
<path d="M3485 40.9 L3486.1 37.2 L3488.8 39.8 Z" fill="#444"/>
<rect x="3520.3" y="24.1" width="23.2" height="4.4" rx="1.4" fill="#444"/>
<rect x="3529.3" y="22.1" width="5.4" height="3.4" rx="1.2" fill="#444"/>
<rect x="3523.4" y="31.4" width="16.7" height="17.3" rx="1.6" fill="none" stroke="#444" stroke-width="2.7"/>
<path d="M3528.9 31 L3528.9 48.4 M3534.6 31 L3534.6 48.4" stroke="#444" stroke-width="2.5"/>
</svg>
<div class="rowline" style="left:440px;top:981px;width:3130px;height:2px;"></div>
<span class="t" style="left:455.7px;top:1004px;font-size:24.18px;color:#4da8e4;-webkit-text-stroke:0.48px;letter-spacing:0.50px;">pete</span>
<span class="t" style="left:1418.6px;top:1004px;font-size:24.18px;color:#444444;-webkit-text-stroke:0.48px;">-</span>
<span class="t" style="left:1919.0px;top:1004px;font-size:24.18px;color:#444444;-webkit-text-stroke:0.48px;">-</span>
<span class="t" style="left:2334.3px;top:1004px;font-size:24.18px;color:#444444;-webkit-text-stroke:0.48px;letter-spacing:-0.54px;">512.00 B</span>
<span class="t" style="left:2459.4px;top:1004px;font-size:24.18px;color:#444444;-webkit-text-stroke:0.48px;letter-spacing:-0.97px;">False</span>
<span class="t" style="left:2962.1px;top:1004px;font-size:24.18px;color:#444444;-webkit-text-stroke:0.48px;letter-spacing:-1.06px;">2025-10-08 17:22:59</span>
<svg style="left:3474px;top:1001.9px" width="74" height="34" viewBox="3474 20 74 34">
<path d="M3496.6 26.7 L3480.4 26.7 Q3478.5 26.7 3478.5 28.6 L3478.5 43.3 Q3478.5 45.2 3480.4 45.2 L3495.6 45.2 Q3497.5 45.2 3497.5 43.3 L3497.5 35.4" fill="none" stroke="#444" stroke-width="2.8"/>
<path d="M3488.2 37.7 L3499.2 28.4" stroke="#444" stroke-width="4.6"/>
<path d="M3500.2 27.5 L3501.4 26.5" stroke="#444" stroke-width="4.4"/>
<path d="M3485 40.9 L3486.1 37.2 L3488.8 39.8 Z" fill="#444"/>
<rect x="3520.3" y="24.1" width="23.2" height="4.4" rx="1.4" fill="#444"/>
<rect x="3529.3" y="22.1" width="5.4" height="3.4" rx="1.2" fill="#444"/>
<rect x="3523.4" y="31.4" width="16.7" height="17.3" rx="1.6" fill="none" stroke="#444" stroke-width="2.7"/>
<path d="M3528.9 31 L3528.9 48.4 M3534.6 31 L3534.6 48.4" stroke="#444" stroke-width="2.5"/>
</svg>
<div class="rowline" style="left:440px;top:1049px;width:3130px;height:2px;"></div>
<span class="t" style="left:455.7px;top:1072px;font-size:24.18px;color:#4da8e4;-webkit-text-stroke:0.48px;letter-spacing:-0.09px;">rp-audit</span>
<span class="t" style="left:1418.6px;top:1072px;font-size:24.18px;color:#444444;-webkit-text-stroke:0.48px;">-</span>
<span class="t" style="left:1919.0px;top:1072px;font-size:24.18px;color:#444444;-webkit-text-stroke:0.48px;">-</span>
<span class="t" style="left:2347.1px;top:1072px;font-size:24.18px;color:#444444;-webkit-text-stroke:0.48px;letter-spacing:-0.93px;">12.62 G</span>
<span class="t" style="left:2459.4px;top:1072px;font-size:24.18px;color:#444444;-webkit-text-stroke:0.48px;letter-spacing:-0.97px;">False</span>
<span class="t" style="left:2962.1px;top:1072px;font-size:24.18px;color:#444444;-webkit-text-stroke:0.48px;letter-spacing:-1.06px;">2025-09-25 17:21:07</span>
<svg style="left:3474px;top:1069.9px" width="74" height="34" viewBox="3474 20 74 34">
<path d="M3496.6 26.7 L3480.4 26.7 Q3478.5 26.7 3478.5 28.6 L3478.5 43.3 Q3478.5 45.2 3480.4 45.2 L3495.6 45.2 Q3497.5 45.2 3497.5 43.3 L3497.5 35.4" fill="none" stroke="#444" stroke-width="2.8"/>
<path d="M3488.2 37.7 L3499.2 28.4" stroke="#444" stroke-width="4.6"/>
<path d="M3500.2 27.5 L3501.4 26.5" stroke="#444" stroke-width="4.4"/>
<path d="M3485 40.9 L3486.1 37.2 L3488.8 39.8 Z" fill="#444"/>
<rect x="3520.3" y="24.1" width="23.2" height="4.4" rx="1.4" fill="#444"/>
<rect x="3529.3" y="22.1" width="5.4" height="3.4" rx="1.2" fill="#444"/>
<rect x="3523.4" y="31.4" width="16.7" height="17.3" rx="1.6" fill="none" stroke="#444" stroke-width="2.7"/>
<path d="M3528.9 31 L3528.9 48.4 M3534.6 31 L3534.6 48.4" stroke="#444" stroke-width="2.5"/>
</svg>
<div class="rowline" style="left:440px;top:1117px;width:3130px;height:2px;"></div>
<span class="t" style="left:456.7px;top:1140px;font-size:24.18px;color:#4da8e4;-webkit-text-stroke:0.48px;letter-spacing:-0.08px;">thanksgiving</span>
<span class="t" style="left:1418.6px;top:1140px;font-size:24.18px;color:#444444;-webkit-text-stroke:0.48px;">-</span>
<span class="t" style="left:1919.0px;top:1140px;font-size:24.18px;color:#444444;-webkit-text-stroke:0.48px;">-</span>
<span class="t" style="left:2379.7px;top:1140px;font-size:24.18px;color:#444444;-webkit-text-stroke:0.48px;letter-spacing:-0.07px;">0.00</span>
<span class="t" style="left:2459.4px;top:1140px;font-size:24.18px;color:#444444;-webkit-text-stroke:0.48px;letter-spacing:-0.97px;">False</span>
<span class="t" style="left:2962.1px;top:1140px;font-size:24.18px;color:#444444;-webkit-text-stroke:0.48px;letter-spacing:-0.94px;">2025-11-21 10:49:37</span>
<svg style="left:3474px;top:1137.9px" width="74" height="34" viewBox="3474 20 74 34">
<path d="M3496.6 26.7 L3480.4 26.7 Q3478.5 26.7 3478.5 28.6 L3478.5 43.3 Q3478.5 45.2 3480.4 45.2 L3495.6 45.2 Q3497.5 45.2 3497.5 43.3 L3497.5 35.4" fill="none" stroke="#444" stroke-width="2.8"/>
<path d="M3488.2 37.7 L3499.2 28.4" stroke="#444" stroke-width="4.6"/>
<path d="M3500.2 27.5 L3501.4 26.5" stroke="#444" stroke-width="4.4"/>
<path d="M3485 40.9 L3486.1 37.2 L3488.8 39.8 Z" fill="#444"/>
<rect x="3520.3" y="24.1" width="23.2" height="4.4" rx="1.4" fill="#444"/>
<rect x="3529.3" y="22.1" width="5.4" height="3.4" rx="1.2" fill="#444"/>
<rect x="3523.4" y="31.4" width="16.7" height="17.3" rx="1.6" fill="none" stroke="#444" stroke-width="2.7"/>
<path d="M3528.9 31 L3528.9 48.4 M3534.6 31 L3534.6 48.4" stroke="#444" stroke-width="2.5"/>
</svg>
<div class="rowline" style="left:440px;top:1185px;width:3130px;height:2px;"></div>
<span class="t" style="left:455.7px;top:1208px;font-size:24.18px;color:#4da8e4;-webkit-text-stroke:0.48px;letter-spacing:-0.53px;">udfsa::udfsa-account-01</span>
<span class="t" style="left:1418.6px;top:1208px;font-size:24.18px;color:#444444;-webkit-text-stroke:0.48px;">-</span>
<span class="t" style="left:1919.0px;top:1208px;font-size:24.18px;color:#444444;-webkit-text-stroke:0.48px;">-</span>
<span class="t" style="left:2331.4px;top:1208px;font-size:24.18px;color:#444444;-webkit-text-stroke:0.48px;letter-spacing:-0.27px;">454.50 K</span>
<span class="t" style="left:2459.4px;top:1208px;font-size:24.18px;color:#444444;-webkit-text-stroke:0.48px;letter-spacing:-0.97px;">False</span>
<span class="t" style="left:2962.1px;top:1208px;font-size:24.18px;color:#444444;-webkit-text-stroke:0.48px;letter-spacing:-0.94px;">2025-11-16 01:10:17</span>
<svg style="left:3474px;top:1205.9px" width="74" height="34" viewBox="3474 20 74 34">
<path d="M3496.6 26.7 L3480.4 26.7 Q3478.5 26.7 3478.5 28.6 L3478.5 43.3 Q3478.5 45.2 3480.4 45.2 L3495.6 45.2 Q3497.5 45.2 3497.5 43.3 L3497.5 35.4" fill="none" stroke="#444" stroke-width="2.8"/>
<path d="M3488.2 37.7 L3499.2 28.4" stroke="#444" stroke-width="4.6"/>
<path d="M3500.2 27.5 L3501.4 26.5" stroke="#444" stroke-width="4.4"/>
<path d="M3485 40.9 L3486.1 37.2 L3488.8 39.8 Z" fill="#444"/>
<rect x="3520.3" y="24.1" width="23.2" height="4.4" rx="1.4" fill="#444"/>
<rect x="3529.3" y="22.1" width="5.4" height="3.4" rx="1.2" fill="#444"/>
<rect x="3523.4" y="31.4" width="16.7" height="17.3" rx="1.6" fill="none" stroke="#444" stroke-width="2.7"/>
<path d="M3528.9 31 L3528.9 48.4 M3534.6 31 L3534.6 48.4" stroke="#444" stroke-width="2.5"/>
</svg>
<div style="left:432px;top:848px;width:3144px;height:62px;border:10px solid #e60a0a;"></div>
</section>
<section class="g">
<div id="exports" style="left:438px;top:1284px;width:3134px;height:700px;background:#fff;border:2px solid #c6c6c6;"></div>
<div style="left:440px;top:1286px;width:3130px;height:169px;background:#f7f7f7;"></div>
<div class="rowline" style="left:440px;top:1349px;width:3130px;height:2px;"></div>
<div class="rowline" style="left:440px;top:1453px;width:3130px;height:2px;"></div>
<span class="t" style="left:460.2px;top:1302px;font-size:29.1px;color:#3b3b3b;-webkit-text-stroke:0.58px;letter-spacing:0.21px;">Account Exports</span>
<span class="t" style="left:3361.6px;top:1307px;font-size:23.75px;color:#444;font-weight:700;-webkit-text-stroke:0.50px;letter-spacing:-1.07px;transform:scaleX(0.9591);">1-9</span>
<span class="t" style="left:3399.9px;top:1307px;font-size:23.75px;color:#8b8b8b;-webkit-text-stroke:0.48px;letter-spacing:0.13px;">of 9</span>
<svg style="left:3466px;top:1300.8px" width="80" height="40" viewBox="3466 16 80 40"><path d="M3470.4 34.3 L3497.8 34.3 M3484.1 20.5 L3484.1 48" stroke="#3b3b3b" stroke-width="3.6"/><circle cx="3528.2" cy="23.8" r="3.7" fill="#3b3b3b"/><circle cx="3528.2" cy="34.3" r="3.7" fill="#3b3b3b"/><circle cx="3528.2" cy="44.8" r="3.7" fill="#3b3b3b"/></svg>
<div class="vline" style="left:1190px;top:1351px;width:2px;height:102px;"></div>
<div class="vline" style="left:1941px;top:1351px;width:2px;height:102px;"></div>
<div class="vline" style="left:2694px;top:1351px;width:2px;height:102px;"></div>
<div class="vline" style="left:3449px;top:1351px;width:2px;height:102px;"></div>
<span class="t" style="left:455.6px;top:1368px;font-size:22.8px;color:#8c8c8c;font-weight:700;letter-spacing:-0.30px;">Server</span>
<span class="t" style="left:1208.2px;top:1368px;font-size:22.8px;color:#8c8c8c;font-weight:700;letter-spacing:-0.50px;">Account</span>
<span class="t" style="left:1958.3px;top:1368px;font-size:22.8px;color:#8c8c8c;font-weight:700;">Enabled</span>
<span class="t" style="left:2711.6px;top:1368px;font-size:22.8px;color:#8c8c8c;font-weight:700;letter-spacing:-0.45px;">S3 Export Policy</span>
<div class="inp" style="left:456px;top:1403px;width:500px;height:44px;"></div>
<div class="inp" style="left:1208px;top:1403px;width:500px;height:44px;"></div>
<div class="inp" style="left:1959px;top:1403px;width:500px;height:44px;"></div>
<span class="t" style="left:1969.3px;top:1413px;font-size:23.28px;color:#8f8f8f;-webkit-text-stroke:0.47px;letter-spacing:0.25px;">All</span>
<svg style="left:2432.3px;top:1418px" width="20" height="12" viewBox="0 0 20 12"><path d="M2 2.5 L10 10 L18 2.5" fill="none" stroke="#858585" stroke-width="2.3"/></svg>
<div class="inp" style="left:2713px;top:1403px;width:500px;height:44px;"></div>
<span class="t" style="left:456.9px;top:1476px;font-size:24.18px;color:#4da8e4;-webkit-text-stroke:0.48px;letter-spacing:-0.36px;">_array_server</span>
<span class="t" style="left:1206.5px;top:1476px;font-size:24.18px;color:#4da8e4;-webkit-text-stroke:0.48px;letter-spacing:-0.33px;">kehui-s3</span>
<span class="t" style="left:1958.6px;top:1476px;font-size:24.18px;color:#444444;-webkit-text-stroke:0.48px;letter-spacing:-1.07px;">True</span>
<span class="t" style="left:2712.2px;top:1476px;font-size:24.18px;color:#4da8e4;-webkit-text-stroke:0.48px;letter-spacing:-0.05px;">_s3_export_allow_everything</span>
<svg style="left:3474px;top:1473.9px" width="74" height="34" viewBox="3474 20 74 34">
<path d="M3496.6 26.7 L3480.4 26.7 Q3478.5 26.7 3478.5 28.6 L3478.5 43.3 Q3478.5 45.2 3480.4 45.2 L3495.6 45.2 Q3497.5 45.2 3497.5 43.3 L3497.5 35.4" fill="none" stroke="#444" stroke-width="2.8"/>
<path d="M3488.2 37.7 L3499.2 28.4" stroke="#444" stroke-width="4.6"/>
<path d="M3500.2 27.5 L3501.4 26.5" stroke="#444" stroke-width="4.4"/>
<path d="M3485 40.9 L3486.1 37.2 L3488.8 39.8 Z" fill="#444"/>
<rect x="3520.3" y="24.1" width="23.2" height="4.4" rx="1.4" fill="#444"/>
<rect x="3529.3" y="22.1" width="5.4" height="3.4" rx="1.2" fill="#444"/>
<rect x="3523.4" y="31.4" width="16.7" height="17.3" rx="1.6" fill="none" stroke="#444" stroke-width="2.7"/>
<path d="M3528.9 31 L3528.9 48.4 M3534.6 31 L3534.6 48.4" stroke="#444" stroke-width="2.5"/>
</svg>
<div class="rowline" style="left:440px;top:1521px;width:3130px;height:2px;"></div>
<span class="t" style="left:456.9px;top:1544px;font-size:24.18px;color:#4da8e4;-webkit-text-stroke:0.48px;letter-spacing:-0.36px;">_array_server</span>
<span class="t" style="left:1206.5px;top:1544px;font-size:24.18px;color:#4da8e4;-webkit-text-stroke:0.48px;letter-spacing:-0.27px;">nutanix-prism</span>
<span class="t" style="left:1958.6px;top:1544px;font-size:24.18px;color:#444444;-webkit-text-stroke:0.48px;letter-spacing:-1.07px;">True</span>
<span class="t" style="left:2712.2px;top:1544px;font-size:24.18px;color:#4da8e4;-webkit-text-stroke:0.48px;letter-spacing:-0.05px;">_s3_export_allow_everything</span>
<svg style="left:3474px;top:1541.9px" width="74" height="34" viewBox="3474 20 74 34">
<path d="M3496.6 26.7 L3480.4 26.7 Q3478.5 26.7 3478.5 28.6 L3478.5 43.3 Q3478.5 45.2 3480.4 45.2 L3495.6 45.2 Q3497.5 45.2 3497.5 43.3 L3497.5 35.4" fill="none" stroke="#444" stroke-width="2.8"/>
<path d="M3488.2 37.7 L3499.2 28.4" stroke="#444" stroke-width="4.6"/>
<path d="M3500.2 27.5 L3501.4 26.5" stroke="#444" stroke-width="4.4"/>
<path d="M3485 40.9 L3486.1 37.2 L3488.8 39.8 Z" fill="#444"/>
<rect x="3520.3" y="24.1" width="23.2" height="4.4" rx="1.4" fill="#444"/>
<rect x="3529.3" y="22.1" width="5.4" height="3.4" rx="1.2" fill="#444"/>
<rect x="3523.4" y="31.4" width="16.7" height="17.3" rx="1.6" fill="none" stroke="#444" stroke-width="2.7"/>
<path d="M3528.9 31 L3528.9 48.4 M3534.6 31 L3534.6 48.4" stroke="#444" stroke-width="2.5"/>
</svg>
<div class="rowline" style="left:440px;top:1589px;width:3130px;height:2px;"></div>
<span class="t" style="left:456.9px;top:1612px;font-size:24.18px;color:#4da8e4;-webkit-text-stroke:0.48px;letter-spacing:-0.36px;">_array_server</span>
<span class="t" style="left:1206.5px;top:1612px;font-size:24.18px;color:#4da8e4;-webkit-text-stroke:0.48px;letter-spacing:-0.14px;">partners</span>
<span class="t" style="left:1958.6px;top:1612px;font-size:24.18px;color:#444444;-webkit-text-stroke:0.48px;letter-spacing:-1.07px;">True</span>
<span class="t" style="left:2712.2px;top:1612px;font-size:24.18px;color:#4da8e4;-webkit-text-stroke:0.48px;letter-spacing:-0.05px;">_s3_export_allow_everything</span>
<svg style="left:3474px;top:1609.9px" width="74" height="34" viewBox="3474 20 74 34">
<path d="M3496.6 26.7 L3480.4 26.7 Q3478.5 26.7 3478.5 28.6 L3478.5 43.3 Q3478.5 45.2 3480.4 45.2 L3495.6 45.2 Q3497.5 45.2 3497.5 43.3 L3497.5 35.4" fill="none" stroke="#444" stroke-width="2.8"/>
<path d="M3488.2 37.7 L3499.2 28.4" stroke="#444" stroke-width="4.6"/>
<path d="M3500.2 27.5 L3501.4 26.5" stroke="#444" stroke-width="4.4"/>
<path d="M3485 40.9 L3486.1 37.2 L3488.8 39.8 Z" fill="#444"/>
<rect x="3520.3" y="24.1" width="23.2" height="4.4" rx="1.4" fill="#444"/>
<rect x="3529.3" y="22.1" width="5.4" height="3.4" rx="1.2" fill="#444"/>
<rect x="3523.4" y="31.4" width="16.7" height="17.3" rx="1.6" fill="none" stroke="#444" stroke-width="2.7"/>
<path d="M3528.9 31 L3528.9 48.4 M3534.6 31 L3534.6 48.4" stroke="#444" stroke-width="2.5"/>
</svg>
<div class="rowline" style="left:440px;top:1657px;width:3130px;height:2px;"></div>
<span class="t" style="left:456.9px;top:1680px;font-size:24.18px;color:#4da8e4;-webkit-text-stroke:0.48px;letter-spacing:-0.36px;">_array_server</span>
<span class="t" style="left:1206.5px;top:1680px;font-size:24.18px;color:#4da8e4;-webkit-text-stroke:0.48px;letter-spacing:0.50px;">pete</span>
<span class="t" style="left:1958.6px;top:1680px;font-size:24.18px;color:#444444;-webkit-text-stroke:0.48px;letter-spacing:-1.07px;">True</span>
<span class="t" style="left:2712.2px;top:1680px;font-size:24.18px;color:#4da8e4;-webkit-text-stroke:0.48px;letter-spacing:-0.05px;">_s3_export_allow_everything</span>
<svg style="left:3474px;top:1677.9px" width="74" height="34" viewBox="3474 20 74 34">
<path d="M3496.6 26.7 L3480.4 26.7 Q3478.5 26.7 3478.5 28.6 L3478.5 43.3 Q3478.5 45.2 3480.4 45.2 L3495.6 45.2 Q3497.5 45.2 3497.5 43.3 L3497.5 35.4" fill="none" stroke="#444" stroke-width="2.8"/>
<path d="M3488.2 37.7 L3499.2 28.4" stroke="#444" stroke-width="4.6"/>
<path d="M3500.2 27.5 L3501.4 26.5" stroke="#444" stroke-width="4.4"/>
<path d="M3485 40.9 L3486.1 37.2 L3488.8 39.8 Z" fill="#444"/>
<rect x="3520.3" y="24.1" width="23.2" height="4.4" rx="1.4" fill="#444"/>
<rect x="3529.3" y="22.1" width="5.4" height="3.4" rx="1.2" fill="#444"/>
<rect x="3523.4" y="31.4" width="16.7" height="17.3" rx="1.6" fill="none" stroke="#444" stroke-width="2.7"/>
<path d="M3528.9 31 L3528.9 48.4 M3534.6 31 L3534.6 48.4" stroke="#444" stroke-width="2.5"/>
</svg>
<div class="rowline" style="left:440px;top:1725px;width:3130px;height:2px;"></div>
<span class="t" style="left:456.9px;top:1748px;font-size:24.18px;color:#4da8e4;-webkit-text-stroke:0.48px;letter-spacing:-0.36px;">_array_server</span>
<span class="t" style="left:1206.5px;top:1748px;font-size:24.18px;color:#4da8e4;-webkit-text-stroke:0.48px;letter-spacing:-0.09px;">rp-audit</span>
<span class="t" style="left:1958.6px;top:1748px;font-size:24.18px;color:#444444;-webkit-text-stroke:0.48px;letter-spacing:-1.07px;">True</span>
<span class="t" style="left:2712.2px;top:1748px;font-size:24.18px;color:#4da8e4;-webkit-text-stroke:0.48px;letter-spacing:-0.05px;">_s3_export_allow_everything</span>
<svg style="left:3474px;top:1745.9px" width="74" height="34" viewBox="3474 20 74 34">
<path d="M3496.6 26.7 L3480.4 26.7 Q3478.5 26.7 3478.5 28.6 L3478.5 43.3 Q3478.5 45.2 3480.4 45.2 L3495.6 45.2 Q3497.5 45.2 3497.5 43.3 L3497.5 35.4" fill="none" stroke="#444" stroke-width="2.8"/>
<path d="M3488.2 37.7 L3499.2 28.4" stroke="#444" stroke-width="4.6"/>
<path d="M3500.2 27.5 L3501.4 26.5" stroke="#444" stroke-width="4.4"/>
<path d="M3485 40.9 L3486.1 37.2 L3488.8 39.8 Z" fill="#444"/>
<rect x="3520.3" y="24.1" width="23.2" height="4.4" rx="1.4" fill="#444"/>
<rect x="3529.3" y="22.1" width="5.4" height="3.4" rx="1.2" fill="#444"/>
<rect x="3523.4" y="31.4" width="16.7" height="17.3" rx="1.6" fill="none" stroke="#444" stroke-width="2.7"/>
<path d="M3528.9 31 L3528.9 48.4 M3534.6 31 L3534.6 48.4" stroke="#444" stroke-width="2.5"/>
</svg>
<div class="rowline" style="left:440px;top:1793px;width:3130px;height:2px;"></div>
<span class="t" style="left:456.9px;top:1816px;font-size:24.18px;color:#4da8e4;-webkit-text-stroke:0.48px;letter-spacing:-0.36px;">_array_server</span>
<span class="t" style="left:1207.5px;top:1816px;font-size:24.18px;color:#4da8e4;-webkit-text-stroke:0.48px;letter-spacing:-0.08px;">thanksgiving</span>
<span class="t" style="left:1958.6px;top:1816px;font-size:24.18px;color:#444444;-webkit-text-stroke:0.48px;letter-spacing:-1.07px;">True</span>
<span class="t" style="left:2712.2px;top:1816px;font-size:24.18px;color:#4da8e4;-webkit-text-stroke:0.48px;letter-spacing:-0.05px;">_s3_export_allow_everything</span>
<svg style="left:3474px;top:1813.9px" width="74" height="34" viewBox="3474 20 74 34">
<path d="M3496.6 26.7 L3480.4 26.7 Q3478.5 26.7 3478.5 28.6 L3478.5 43.3 Q3478.5 45.2 3480.4 45.2 L3495.6 45.2 Q3497.5 45.2 3497.5 43.3 L3497.5 35.4" fill="none" stroke="#444" stroke-width="2.8"/>
<path d="M3488.2 37.7 L3499.2 28.4" stroke="#444" stroke-width="4.6"/>
<path d="M3500.2 27.5 L3501.4 26.5" stroke="#444" stroke-width="4.4"/>
<path d="M3485 40.9 L3486.1 37.2 L3488.8 39.8 Z" fill="#444"/>
<rect x="3520.3" y="24.1" width="23.2" height="4.4" rx="1.4" fill="#444"/>
<rect x="3529.3" y="22.1" width="5.4" height="3.4" rx="1.2" fill="#444"/>
<rect x="3523.4" y="31.4" width="16.7" height="17.3" rx="1.6" fill="none" stroke="#444" stroke-width="2.7"/>
<path d="M3528.9 31 L3528.9 48.4 M3534.6 31 L3534.6 48.4" stroke="#444" stroke-width="2.5"/>
</svg>
<div class="rowline" style="left:440px;top:1861px;width:3130px;height:2px;"></div>
<span class="t" style="left:454.9px;top:1884px;font-size:24.18px;color:#4da8e4;-webkit-text-stroke:0.48px;letter-spacing:-0.62px;">kehui-realm-01::kehui-s3-01</span>
<span class="t" style="left:1206.5px;top:1884px;font-size:24.18px;color:#4da8e4;-webkit-text-stroke:0.48px;letter-spacing:-0.62px;">kehui-realm-01::kehui-s3-01</span>
<span class="t" style="left:1958.6px;top:1884px;font-size:24.18px;color:#444444;-webkit-text-stroke:0.48px;letter-spacing:-1.07px;">True</span>
<span class="t" style="left:2710.2px;top:1884px;font-size:24.18px;color:#4da8e4;-webkit-text-stroke:0.48px;letter-spacing:-0.54px;">kehui-realm-01::s3-export</span>
<svg style="left:3474px;top:1881.9px" width="74" height="34" viewBox="3474 20 74 34">
<path d="M3496.6 26.7 L3480.4 26.7 Q3478.5 26.7 3478.5 28.6 L3478.5 43.3 Q3478.5 45.2 3480.4 45.2 L3495.6 45.2 Q3497.5 45.2 3497.5 43.3 L3497.5 35.4" fill="none" stroke="#444" stroke-width="2.8"/>
<path d="M3488.2 37.7 L3499.2 28.4" stroke="#444" stroke-width="4.6"/>
<path d="M3500.2 27.5 L3501.4 26.5" stroke="#444" stroke-width="4.4"/>
<path d="M3485 40.9 L3486.1 37.2 L3488.8 39.8 Z" fill="#444"/>
<rect x="3520.3" y="24.1" width="23.2" height="4.4" rx="1.4" fill="#444"/>
<rect x="3529.3" y="22.1" width="5.4" height="3.4" rx="1.2" fill="#444"/>
<rect x="3523.4" y="31.4" width="16.7" height="17.3" rx="1.6" fill="none" stroke="#444" stroke-width="2.7"/>
<path d="M3528.9 31 L3528.9 48.4 M3534.6 31 L3534.6 48.4" stroke="#444" stroke-width="2.5"/>
</svg>
</section>
<svg style="left:0;top:1830px" width="60" height="58" viewBox="0 1830 60 58">
<path d="M0 1830 L0.7 1836 L0.7 1850.3 A38 38 0 0 0 38.7 1888.3 L60 1888.3 L0 1888.3 Z" fill="#0a5491"/>
<path d="M0.6 1834 L0.7 1850.3 A38 38 0 0 0 38.7 1888.2" fill="none" stroke="#c9d6e2" stroke-opacity=".5" stroke-width="1"/>
</svg>
<svg style="left:3540px;top:1824px" width="60" height="64" viewBox="3540 1824 60 64">
<path d="M3600 1840 L3599.3 1840 L3599.3 1853.6 A34.4 34.4 0 0 1 3564.9 1888 L3540 1888 L3600 1888 Z" fill="#7aa6cf"/>
<path d="M3600.4 1832 L3600.4 1853.6 A35.5 35.5 0 0 1 3564.9 1889.1 L3556 1889.1" fill="none" stroke="#151515" stroke-width="2.3"/>
</svg>
</div>
</body>
</html>
